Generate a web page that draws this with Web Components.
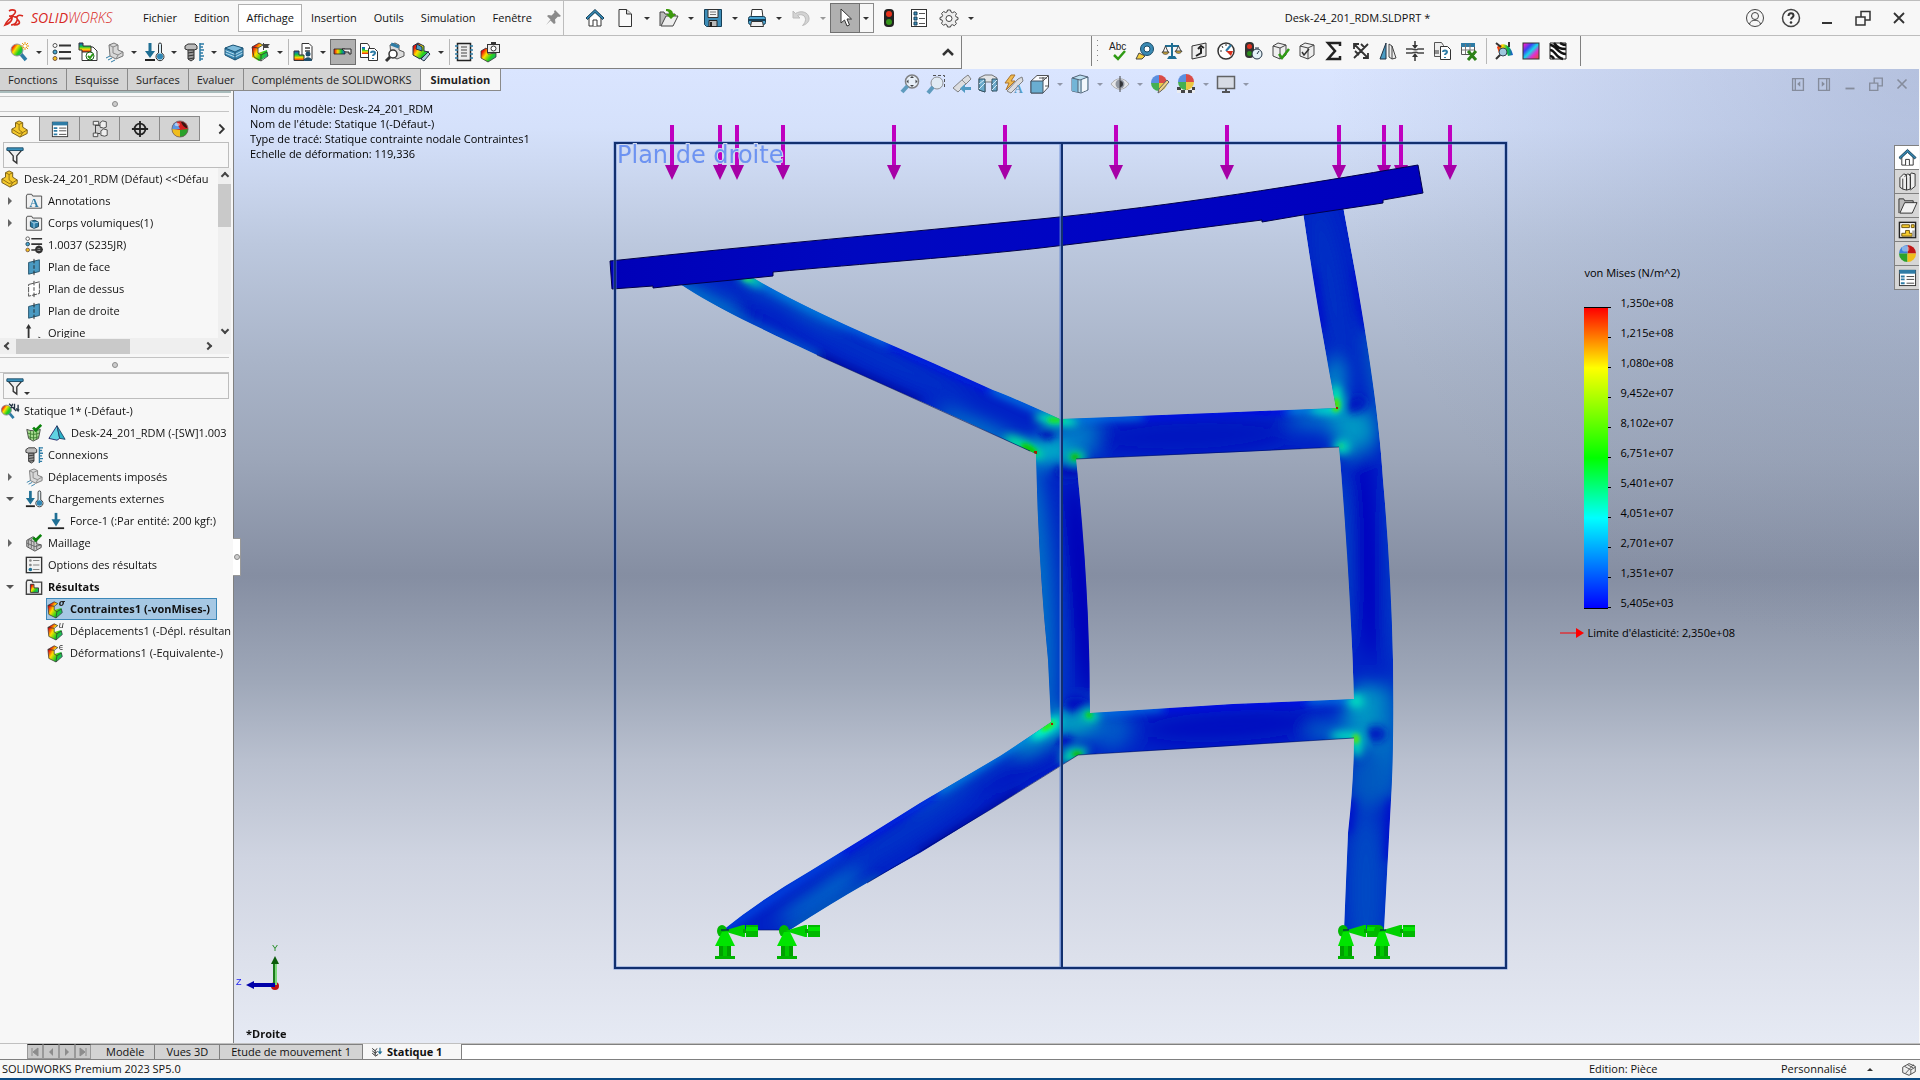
<!DOCTYPE html>
<html lang="fr">
<head>
<meta charset="utf-8">
<title>SOLIDWORKS - Desk-24_201_RDM.SLDPRT</title>
<style>
  html, body {
    margin: 0;
    height: 100%;
  }
  body {
    font: 11px/16px "Open Sans", "Noto Sans", sans-serif;
    color: #111;
    background: #f7f7f7;
    overflow: hidden;
  }
</style>
</head>
<body>
<cad-app></cad-app>

<script>
const ICONS = {
  // application bar
  pin: '<path d="M12 2l6 6-2 1-1-.5-3 3 .5 3.500-1.500 1-3.500-3.500L3 17l4.500-5.500L4 8l1.500-1 3 .5 3-3L11 3.500z" fill="#8b8b8b"/>',
  home: '<path d="M4 9v9h12V9L10 4z" fill="#fff" stroke="#333"/><path d="M8 18v-6h4v6" fill="#fff" stroke="#333"/><path d="M1 10l9-8.500L19 10l-1.500 1.500L10 4.500l-7.500 7z" fill="#3589b5" stroke="#173f56"/>',
  doc: '<path d="M4 1.500h7.500L16.500 6v12.500H4z" fill="#fafafa" stroke="#333"/><path d="M11.500 1.500V6h5" fill="#d8d8d8" stroke="#333"/>',
  open: '<path d="M1 18V4h4l1 2h10v3" fill="#bbb" stroke="#444"/><path d="M2 18l5-10h12l-5 10z" fill="#eee" stroke="#444"/><path d="M7 1c5 0 7 2 7 5h3l-5 5-5-5h3c0-2-1-3-3-3z" fill="#3c9a0c"/>',
  save: '<path d="M1.500 1.500h17v17h-15l-2-2z" fill="#3d8db8" stroke="#173f56"/><path d="M5 1.500h10v8H5z" fill="#f4f4f4" stroke="#333"/><path d="M7 4h6M7 6.500h6" stroke="#777"/><path d="M6 12.500h8v6H6z" fill="#bbb" stroke="#222"/><path d="M8 14v4" stroke="#222" stroke-width="2"/>',
  print: '<path d="M5 1.500h10l1 8H4z" fill="#fff" stroke="#333"/><rect x="1.500" y="8.500" width="17" height="8" rx="2" fill="#4ba5d2" stroke="#173f56"/><path d="M2 12h16" stroke="#173f56" stroke-width="2"/><path d="M4.500 13.500h11l1 5h-13z" fill="#eee" stroke="#333"/>',
  undo: '<path d="M2 3v7h7L6.500 7.500c4-2 8 0 8 4 0 2-1 4-3 6 4-1 7-4 6.500-7.500C17.500 4 10 2 4.500 5.500z" fill="#d3d3d3" stroke="#bbb"/>',
  cursor: '<path d="M6 1v14l3.500-3 2.500 6 2.500-1-2.500-6h4.500z" fill="#fff" stroke="#333"/>',
  traffic: '<rect x="5" y="1" width="10" height="18" rx="4" fill="#222"/><circle cx="10" cy="6" r="3" fill="#e8321c"/><circle cx="10" cy="14" r="3" fill="#35931b"/>',
  sheet: '<rect x="2.500" y="1.500" width="15" height="17" fill="#fff" stroke="#333"/><path d="M5 4h3v3H5zM5 9h3v3H5zM5 14h3v3H5z" fill="#3c8fbb" stroke="#173f56"/><path d="M10 5.500h6M10 10.500h6M10 15.500h6" stroke="#555"/>',
  gear: '<path d="M8.500 2h3l.5 2 1.500.7 2-1 2 2-1 1.800.7 1.500 1.800.5v2l-2 .7-.6 1.500 1 2-2 2-2-1-1.400.6-.5 1.700h-3L8 17l-1.600-.7-1.900 1-2-2 1-2L3 12l-2-.5v-2l2-.7.600-1.400-1-1.900 2-2 2 1L8 4z" fill="#eee" stroke="#444"/><circle cx="10" cy="10.500" r="3" fill="#fff" stroke="#444"/>',
  user: '<circle cx="10" cy="10" r="8.500" fill="none" stroke="#444"/><circle cx="10" cy="8" r="3.500" fill="none" stroke="#444"/><path d="M4.500 16c1-5 10-5 11 0" fill="none" stroke="#444"/>',
  help: '<circle cx="10" cy="10" r="8.500" fill="none" stroke="#444" stroke-width="1.500"/><path d="M7.500 8c0-4 5-3.500 5-.5 0 2-2.500 2-2.500 4" fill="none" stroke="#333" stroke-width="2"/><circle cx="10" cy="14.500" r="1.300" fill="#333"/>',
  minimize: '<path d="M5 15h10" stroke="currentColor" stroke-width="2"/>',
  restore: '<path d="M3 9h9v8H3zM8 9V3.500h9V12h-5" fill="none" stroke="currentColor" stroke-width="1.500"/>',
  close: '<path d="M5 5l10 10M15 5L5 15" stroke="currentColor" stroke-width="1.800"/>',
  panelLeft: '<path d="M4 4h12v13H4zM7 4v13" fill="none" stroke="currentColor" stroke-width="1.500"/><path d="M12.500 7v6L9 10z" fill="currentColor"/>',
  panelRight: '<path d="M4 4h12v13H4zM13 4v13" fill="none" stroke="currentColor" stroke-width="1.500"/><path d="M7.500 7v6l3.500-3z" fill="currentColor"/>',

  // simulation commands
  study: '<path d="M11 11l6 7" stroke="#2e7ca6" stroke-width="3.500"/><circle cx="8" cy="8" r="6" fill="url(#rb)" stroke="#999"/><path d="M16 0v8M12 4h8M13 1l6 6M19 1l-6 6" stroke="#e89a10"/><circle cx="16" cy="4" r="1.500" fill="#fff"/>',
  material: '<circle cx="3" cy="3.500" r="2" fill="#fff" stroke="#555"/><circle cx="3" cy="10" r="2" fill="#46a4d0" stroke="#245"/><circle cx="3" cy="16.500" r="2" fill="#f6c21a" stroke="#754"/><path d="M7 3.500h12M7 10h12M7 16.500h12" stroke="#333" stroke-width="2"/>',
  advisor: '<path d="M8 5h7l4 4v9.500H4V10z" fill="#fff" stroke="#333"/><path d="M1 1h4v3h8v6H4V8H1z" fill="url(#rbh)" stroke="#333"/><circle cx="12" cy="14" r="4" fill="#fff" stroke="#1a661a"/><path d="M10 14l2 2 3-4" fill="none" stroke="#2a9a12" stroke-width="2"/>',
  fixture: '<path d="M5 3l5-2 4 2v5l5 2v4l-7 3-6-3z" fill="#d8d8d8" stroke="#777"/><path d="M5 3l4 2v6l5 2 5-3M14 13l-2 4M9 5l5-2" fill="none" stroke="#888"/><path d="M2 16l4-2M4 18l4-2M7 20l4-2" stroke="#2e7ca6"/>',
  load: '<path d="M6 1v11" stroke="#1f6f94" stroke-width="3"/><path d="M1 9h10l-5 7z" fill="#1f6f94"/><path d="M1 18h10" stroke="#222" stroke-width="2"/><path d="M14.500 2.500a1.500 1.500 0 013 0V11a4 4 0 11-3 0z" fill="#d9eef8" stroke="#333"/><circle cx="16" cy="14.500" r="3" fill="#2f86b4"/>',
  connector: '<path d="M1 4l3-2h7l2 2v3l-3 1H4L1 7z" fill="#bbb" stroke="#333"/><path d="M4 8h6v9l-3 2-3-2z" fill="#999" stroke="#333"/><path d="M4 11l6-1M4 14l6-1M4 17l6-1" stroke="#333"/><path d="M16 1v18M16 2h4M16 5h3M16 8h4M16 11h3M16 14h4M16 17h3" stroke="#2e7ca6" stroke-width="1.500"/>',
  shells: '<path d="M1 6l8-3 10 3v8l-8 4-10-5z" fill="#3a88b2"/><path d="M1 6l8-3 10 3-8 4z" fill="#7dbbdb" stroke="#1c5374"/><path d="M1 8.500l10 4 8-4M1 11l10 4 8-4" fill="none" stroke="#b7ddf0"/><path d="M1 6v7l10 5 8-4V6M11 10v8" fill="none" stroke="#1c5374"/>',
  run: '<path d="M2 5l7-4 4 2-5 3v5l9-3 1 6-9 5-7-4z" fill="url(#rb)"/><path d="M2 5l7-4 4 2-5 3v5l3 2 6-3 1 4-7 5-7-4zM2 5l6 1M11 13v6" fill="none" stroke="#333" stroke-width=".8"/><path d="M13 1h1v7h-1zM14 2h6l-2 2 1 2h-5z" fill="#444"/>',
  results: '<path d="M9 1.500h7l3 3v13H9z" fill="#fff" stroke="#333"/><path d="M12 6h5M12 9h5" stroke="#444" stroke-width="1.500"/><path d="M1 9h5v4h5v5.500H1z" fill="url(#rbh)" stroke="#333"/><circle cx="15" cy="12" r="2.500" fill="#204f6c"/><path d="M11 19c0-5 8-5 8 0z" fill="#204f6c"/>',
  deformed: '<path d="M1 7h11v5H1z" fill="url(#rbx)" stroke="#222" stroke-width=".8"/><path d="M9 7h9v5h-2v-2h-2c-2 0-3-1-5-3z" fill="#eee" stroke="#222"/>',
  compare: '<path d="M1.500 1.500h7l2 3v11h-9z" fill="#fff" stroke="#333"/><path d="M3 5h3v3h3v4H3z" fill="url(#rbh)"/><path d="M9.500 6.500h6l3 3v9h-9z" fill="#fff" stroke="#333"/><path d="M12 11c0-2 4-2 4 0 0 1.500-2 1.500-2 3M14 16v1" fill="none" stroke="#2e7ca6" stroke-width="2"/>',
  probe: '<path d="M5 3l5-2 4 2v5l5 2v4l-7 3-6-3z" fill="#ddd" stroke="#555"/><path d="M6 2l8 3" stroke="#2e7ca6" stroke-width="3"/><circle cx="8" cy="12" r="4" fill="#fff" stroke="#333" stroke-width="1.500"/><path d="M5 15l-4 4" stroke="#333" stroke-width="3"/>',
  plotTools: '<path d="M2 4l5-3 6 3v5l5 1-9 7-7-4z" fill="url(#rb)" stroke="#234"/><path d="M6 2l5 3v4L5 7z" fill="#4a9cc4" stroke="#234"/><path d="M10 17l7-7 2 2-6 7z" fill="#a8cbe0" stroke="#234"/>',
  report: '<rect x="3.500" y="1.500" width="13" height="17" fill="#eee" stroke="#222" stroke-width="1.500"/><path d="M7 5h6M7 8h6M7 11h6M7 14h6" stroke="#444"/><path d="M1 4h3M1 8h3M1 12h3M1 16h3M16 4h3M16 8h3M16 12h3M16 16h3" stroke="#2e7ca6" stroke-width="1.500"/>',
  snapshot: '<path d="M1 9l5-3 2 2v4l8-1v4l-8 5-7-4z" fill="url(#rb)" stroke="#333" stroke-width=".8"/><rect x="7.500" y="2.500" width="12" height="8" fill="#eee" stroke="#333"/><circle cx="13.500" cy="6.500" r="2.500" fill="#fff" stroke="#333"/><path d="M11 1h5" stroke="#333" stroke-width="2"/>',
  up: '<path d="M5 13l5-5 5 5" fill="none" stroke="#333" stroke-width="2.500"/>',

  // tools toolbar
  spell: '<text x="1" y="9" font-size="10" font-family="Liberation Sans" fill="#222">Abc</text><path d="M6 14l4 4 7-8" fill="none" stroke="#2f9a14" stroke-width="2.500"/>',
  measure: '<path d="M1 18l3-6 6 3-3 3z" fill="#f4cf3e" stroke="#444"/><circle cx="12" cy="8" r="6.500" fill="#3a8ab4" stroke="#1c4c66"/><circle cx="12" cy="8" r="3" fill="#fff" stroke="#1c4c66"/>',
  mass: '<path d="M10 2v13M3 5h14" stroke="#1f6f94" stroke-width="2"/><path d="M5 18h10l-2-3H7z" fill="#1f6f94"/><path d="M0 11h7c-1 3-6 3-7 0zM13 10h7c-1 3-6 3-7 0z" fill="#e8b92c" stroke="#444"/><path d="M3.500 5L1 11M3.500 5L6 11M16.500 5L14 10M16.500 5L19 10" stroke="#444"/>',
  section: '<path d="M3 5l14-3v13L3 18z" fill="#eee" stroke="#333"/><path d="M7 15l5-3V7M9 8l3-3 3 2" fill="none" stroke="#222" stroke-width="2"/>',
  sensor: '<circle cx="10" cy="10" r="8" fill="#fff" stroke="#333" stroke-width="1.500"/><path d="M10 10l5-6" stroke="#2e7ca6" stroke-width="2"/><path d="M10 10h7l-2 5z" fill="#d8301c"/><path d="M4 10h2M6 5l1 2M10 3v2" stroke="#333"/>',
  performance: '<rect x="2" y="1" width="9" height="16" rx="4" fill="#333"/><circle cx="6.500" cy="5.500" r="2.500" fill="#e03020"/><circle cx="6.500" cy="12.500" r="2.500" fill="#2a8a1c"/><circle cx="14" cy="13" r="5" fill="#e6f2f8" stroke="#234"/><path d="M14 13l2-3M12 7h4" stroke="#234"/>',
  checkPart: '<path d="M3 5l5-3 8 2v10l-6 4-7-3z" fill="#eee" stroke="#444"/><path d="M3 5l7 2 6-3M10 7v11" fill="none" stroke="#444"/><path d="M9 13l3 4 7-9" fill="none" stroke="#2f9a14" stroke-width="2.500"/>',
  geometry: '<path d="M3 5l5-3 9 2v10l-6 4-8-3z" fill="#eee" stroke="#444"/><path d="M3 5l8 2 6-3M11 7v11" fill="none" stroke="#444"/><path d="M5 11l2 3 5-6" fill="none" stroke="#333" stroke-width="1.500"/>',
  sigma: '<path d="M16 5V2H4l7 8-7 8h12v-3" fill="none" stroke="#222" stroke-width="2.500"/>',
  deviation: '<path d="M3 3l14 14M17 3L3 17M3 8V3h5M12 17h5v-5M10 3l4 4M4 10l4 4" fill="none" stroke="#333" stroke-width="1.800"/>',
  draft: '<path d="M2 18L8 2v16z" fill="#4a9cc4" stroke="#234"/><path d="M11 3l3 2v13l-3-2zM14 5l4 12-4 1" fill="#eee" stroke="#444"/>',
  thickness: '<path d="M1 8h6c2 0 4 2 6 0h6M1 12h6c2 0 4-2 6 0h6" fill="none" stroke="#444" stroke-width="1.500"/><path d="M10 0v5M10 20v-5" stroke="#333" stroke-width="1.500"/><path d="M7 4h6l-3 4zM7 16h6l-3-4z" fill="#333"/>',
  compareDocs: '<path d="M2.500 1.500h7l2 3v11h-9z" fill="#eee" stroke="#555"/><path d="M8.500 5.500h7l3 3v10h-10z" fill="#fff" stroke="#333"/><path d="M11 11c0-2 4-2 4 0 0 1.500-2 1.500-2 3M13 16v1" fill="none" stroke="#2e7ca6" stroke-width="2"/><path d="M2 10h5M2 12h5" stroke="#333"/>',
  excel: '<path d="M2.500 2.500h13v11h-13z" fill="#fff" stroke="#555"/><path d="M2 4h14" stroke="#2e7ca6" stroke-width="4"/><path d="M3 9h12M6.500 3v10M11 3v10" stroke="#777"/><path d="M9 10l8 9M17 10l-8 9" stroke="#2d8218" stroke-width="3"/>',
  curvature: '<path d="M3 6c6-6 14-2 16 8l-5 1c-1-5-5-6-9-3z" fill="url(#rbx)"/><circle cx="9" cy="11" r="4" fill="#9ec7dd" stroke="#345"/><path d="M6 14l-4 4M2 2l5 4M15 1v5" stroke="#333" stroke-width="2"/>',
  spectrum: '<rect x="2" y="2" width="16" height="16" fill="url(#sp)" stroke="#333"/>',
  zebra: '<path d="M2 2h16v16H2z" fill="#fff"/><path d="M2 4c6 0 8 9 16 9M2 9c5 0 6 8 13 9M6 2c4 5 6 6 12 6M2 15c2 0 3 1 4 3M12 2c2 1 3 2 6 2" fill="none" stroke="#111" stroke-width="2.500"/><path d="M2 2h16v16H2z" fill="none" stroke="#222"/>',

  // view toolbar
  zoomFit: '<circle cx="12" cy="7.500" r="6.500" fill="#e9f1f8" stroke="#777" stroke-width="1.500"/><path d="M7.500 12L2 18" stroke="#5294b8" stroke-width="4"/><path d="M12 2l2 2h-4zM12 13l2-2h-4zM6.500 7.500l2-2v4zM17.500 7.500l-2-2v4z" fill="#333"/>',
  zoomArea: '<path d="M7 1.500h11.500V14" fill="none" stroke="#444" stroke-dasharray="3 2"/><circle cx="11" cy="9" r="6" fill="#e2ecf4" stroke="#888"/><path d="M7 13l-5 6" stroke="#5294b8" stroke-width="4"/>',
  previous: '<path d="M1 14L12 4l4-3 3 4-3 3L6 18z" fill="#ddd" stroke="#777"/><path d="M10 6l4 4" stroke="#888"/><path d="M19 13h-6v-3l-5 4.500 5 4.500v-3h6z" fill="#4393bd"/>',
  sectionView: '<path d="M1 4l6-3h7l5 3v12l-5 1V8H7v10l-6-2z" fill="#e4e4e4" stroke="#666"/><path d="M1 5h6v13l-6-2zM14 5h5v12h-5z" fill="#5da3c6" stroke="#245"/><path d="M1 10l5-4M1 15l6-6M14 11l5-5M14 16l5-5" stroke="#d5ebf6"/>',
  dynamicView: '<path d="M7 1L1 9h4l-3 7 9-9H7l4-6z" fill="#f3b63a" stroke="#a5681a"/><path d="M3 17L14 5l4-2 1 4L7 19z" fill="#ddd" stroke="#777"/><text x="10" y="19" font-size="12" font-weight="700" font-family="Liberation Serif" fill="#4a92ba">A</text>',
  orientation: '<path d="M1 7l6-5.500h11.500V13L13 19H1z" fill="#fff" stroke="#444"/><path d="M1 7h12v12H1z" fill="#5fa9cd" stroke="#345"/><path d="M13 7l5-5M13 3v4M9 4h8M15 12h4" stroke="#444"/>',
  display: '<path d="M2 4l8-3 8 2v13l-7 3-9-2z" fill="#b9dff0" stroke="#456"/><path d="M2 4l6 1v13l-6-1z" fill="#69b1d3"/><path d="M2 4l8 2 8-3M8 5v13M11 6v12" fill="none" stroke="#456"/><path d="M12 6l5-2v12l-5 2z" fill="#f5fafc"/>',
  visibility: '<path d="M1 10c5-7 13-7 18 0-5 7-13 7-18 0z" fill="#e7e7e7" stroke="#aaa"/><circle cx="10" cy="10" r="4.500" fill="#8a8f98"/><path d="M10 2v16" stroke="#333"/><path d="M10 7a3 3 0 010 6z" fill="#222"/>',
  appearance: '<path d="M9 9V1a8 8 0 018 8z" fill="#da3c34"/><path d="M9 9V1a8 8 0 00-8 8z" fill="#4d86dd"/><path d="M9 9H1a8 8 0 008 8z" fill="#36ab3e"/><path d="M9 9h8a8 8 0 01-8 8z" fill="#efc52e"/><path d="M8 19l1-4 8-9 2 2-8 9z" fill="#f4d27a" stroke="#555"/>',
  scene: '<path d="M1 14h18v5H1z" fill="#eee"/><path d="M1 13h4v3H1zM9 13h3v3H9zM16 13h3v3h-3zM5 16h4v3H5zM12 16h4v3h-4z" fill="#333"/><path d="M10 8V0a8 8 0 018 8z" fill="#da3c34"/><path d="M10 8V0a8 8 0 00-8 8z" fill="#4d86dd"/><path d="M10 8H2a8 8 0 008 8z" fill="#36ab3e"/><path d="M10 8h8a8 8 0 01-8 8z" fill="#efc52e"/>',
  monitor: '<rect x="1.500" y="2.500" width="17" height="12" fill="#d7dbe2" stroke="#555" stroke-width="1.500"/><path d="M10 15v3M6 18h8" stroke="#444" stroke-width="2"/>',

  // panels and trees
  part: '<path d="M1 10l4-2V3l4-2 4 2v5l5 3v4l-8 4-9-5z" fill="#f5c92c" stroke="#6d5410"/><path d="M5 3l4 2v6l4 3 5-3M9 5l4-2M10 19l3-5M1 10l8 5 4-1" fill="none" stroke="#8b6b12"/>',
  property: '<rect x="1.500" y="2.500" width="17" height="16" fill="#fff" stroke="#333"/><path d="M1.500 4h17" stroke="#2e7ca6" stroke-width="4"/><path d="M3 8h4v2H3zM3 11h4v2H3zM3 15h4v2H3z" fill="#2e7ca6"/><path d="M9 9h8M9 12h8M9 16h8" stroke="#444"/>',
  config: '<path d="M5 2v15M5 6h5M5 15h5" stroke="#333" fill="none"/><path d="M2.500 1.500h6v4h-6zM2.500 14.500h5v4h-5zM10 3l3-2 4 1v6l-3 1-4-1zM11 12l3-2 4 1v6l-3 1-4-1z" fill="#eee" stroke="#444"/>',
  target: '<circle cx="10" cy="10" r="6" fill="none" stroke="#222" stroke-width="2"/><path d="M10 1v18M1 10h18" stroke="#222" stroke-width="2"/>',
  ball: '<path d="M10 10V1a9 9 0 019 9z" fill="#c01818"/><path d="M10 10V1a9 9 0 00-9 9z" fill="#3a80da"/><path d="M10 10H1a9 9 0 009 9z" fill="#2ba22b"/><path d="M10 10h9a9 9 0 01-9 9z" fill="#f0bd1c"/><ellipse cx="8" cy="5" rx="4" ry="3" fill="#fff" opacity=".4"/>',
  ballHalf: '<circle cx="10" cy="10" r="9" fill="#d42020"/><path d="M10 10L6 2a9 9 0 00-5 9z" fill="#5b97e4"/><path d="M1 10l9 1v8a9 9 0 01-9-9z" fill="#f0bd1c"/><path d="M10 11l9-1a9 9 0 01-9 9z" fill="#2ba22b"/><path d="M11 2c4 0 7 4 7 7-3 0-6-4-7-7z" fill="#3a1410"/><ellipse cx="7" cy="5" rx="3" ry="2" fill="#fff" opacity=".5"/><circle cx="10" cy="10" r="9" fill="none" stroke="#666" stroke-width=".8"/>',
  next: '<path d="M7 5l5 5-5 5" fill="none" stroke="#333" stroke-width="2"/>',
  filter: '<path d="M2 4h16l-6 7v8l-4-3v-5z" fill="#eee" stroke="#333" stroke-width="1.500"/><path d="M1 2h18v3H1z" fill="#3a92bd" stroke="#1c4c66"/>',
  annotations: '<path d="M1.500 18V4.500l1-2h5l1 2h10V18z" fill="#f0f0f0" stroke="#444"/><text x="5" y="17" font-size="14" font-weight="700" font-family="Liberation Serif" fill="#2e7ca6">A</text>',
  bodies: '<path d="M1.500 18V4.500l1-2h5l1 2h10V18z" fill="#f0f0f0" stroke="#444"/><path d="M6 8l5-1 4 2v5l-5 2-4-2z" fill="#2e7ca6" stroke="#173f56"/><path d="M6 8l4 2 5-1M10 10v6" fill="none" stroke="#b7ddf0"/>',
  steel: '<circle cx="3" cy="3" r="2" fill="#fff" stroke="#555"/><circle cx="3" cy="9" r="2" fill="#46a4d0" stroke="#245"/><circle cx="3" cy="15.500" r="2" fill="#f6c21a" stroke="#754"/><path d="M7 3h12M7 9h12M7 15.500h5" stroke="#333" stroke-width="1.800"/><circle cx="15.500" cy="15" r="3" fill="none" stroke="#333" stroke-width="2.500"/><path d="M15.500 10.500v9M11 15h9" stroke="#333"/>',
  plane: '<path d="M4 5l12-3v13L4 18z" fill="#4a9ac2" stroke="#1f4f69"/><path d="M10 1v5M10 8v4M10 14v5" stroke="#222"/>',
  planeHidden: '<path d="M4 5l12-3v13L4 18z" fill="#fff" stroke="#444" stroke-dasharray="6 1"/><path d="M10 1v5M10 8v4M10 14v5" stroke="#333"/>',
  origin: '<path d="M4 3v14h13" fill="none" stroke="#333" stroke-width="2"/><path d="M1 5l3-5 3 5zM15 14l5 3-5 3z" fill="#333"/>',
  studyTree: '<path d="M9 12l5 6" stroke="#2e7ca6" stroke-width="3"/><circle cx="6" cy="9" r="5.500" fill="url(#rb)" stroke="#888"/><path d="M9 2l8 8M11 7l2-5M15 9V2M19 3v7M17 7l2 3 1-2" fill="none" stroke="#234" stroke-width="1.500"/>',
  meshOk: '<path d="M2 6c4 2 11 2 15 0l-2 10-6 3-5-3z" fill="#a8dc90" stroke="#444"/><path d="M6 8v9M9.500 8v10M13 8v9M3 10c4 2 9 2 13 0M4 14c3 2 8 2 11 0" fill="none" stroke="#3c7d31"/><path d="M9 4l3 3 6-6" fill="none" stroke="#0b830b" stroke-width="3"/>',
  shell: '<path d="M1 16L10 2l3 14-3 2z" fill="#5fd3e2" stroke="#226"/><path d="M10 2l9 15-6-1z" fill="#2ab2c8" stroke="#246"/>',
  force: '<path d="M10 1v10" stroke="#1f6f94" stroke-width="3"/><path d="M5 8h10l-5 8z" fill="#1f6f94"/><path d="M1 18h18" stroke="#222" stroke-width="2"/>',
  mesh: '<path d="M2 7l7-4 4 3v5l5 1v3l-7 4-9-5z" fill="#ccc" stroke="#444"/><path d="M4 6v8M7 5v11M10 9v9M2 10l9 4 7-2M13 12v5M4 6l6 3 3-3" fill="none" stroke="#666"/><path d="M9 4l3 3 6-6" fill="none" stroke="#0b830b" stroke-width="3"/>',
  options: '<rect x="1.500" y="1.500" width="17" height="17" fill="#f2f2f2" stroke="#333" stroke-width="1.500"/><circle cx="6" cy="5" r="1.500" fill="#888"/><circle cx="6" cy="10" r="1.500" fill="#888"/><circle cx="6" cy="15" r="2" fill="#1f6f94"/><path d="M9 5h7M9 10h7M9 15h7" stroke="#777"/>',
  folder: '<path d="M1.500 18V4.500l1-2h5l1 2h10V18z" fill="#f0f0f0" stroke="#444" stroke-width="1.500"/><path d="M6 7h4v4h5v5H6z" fill="url(#rb)" stroke="#333"/>',
  stress: '<path d="M1 6l7-4 4 2-4 2v5l8-2 1 5-7 6-8-4z" fill="url(#rb)"/><path d="M1 6l7-4 4 2-4 3v4l3 2 5-3 1 4-7 6-8-4zM1 6l7 1M11 13l-1 7" fill="none" stroke="#333" stroke-width=".8"/><text x="13" y="7" font-size="9" font-style="italic" font-family="DejaVu Sans" fill="#222">σ</text>',
  displacement: '<path d="M1 6l7-4 4 2-4 2v5l8-2 1 5-7 6-8-4z" fill="url(#rb)"/><path d="M1 6l7-4 4 2-4 3v4l3 2 5-3 1 4-7 6-8-4zM1 6l7 1M11 13l-1 7" fill="none" stroke="#333" stroke-width=".8"/><text x="13" y="7" font-size="9" font-style="italic" font-family="DejaVu Sans" fill="#222">u</text>',
  strain: '<path d="M1 6l7-4 4 2-4 2v5l8-2 1 5-7 6-8-4z" fill="url(#rb)"/><path d="M1 6l7-4 4 2-4 3v4l3 2 5-3 1 4-7 6-8-4zM1 6l7 1M11 13l-1 7" fill="none" stroke="#333" stroke-width=".8"/><text x="13" y="7" font-size="9" font-family="DejaVu Sans" fill="#222">ϵ</text>',

  // task pane
  library: '<path d="M2 6l4-4 3 1v16l-4-1-3-2zM7 5l3-3 3 1v15l-4 1M12 4l2-3 4 1v13l-5 4" fill="#eee" stroke="#333"/><path d="M5 7v11M9 6v12M13 5v13" stroke="#333"/>',
  explorer: '<path d="M1 18V3h5l1 2h9v4" fill="#bbb" stroke="#333"/><path d="M2 18L7 7h13l-5 11z" fill="#f2f2f2" stroke="#333"/>',
  palette: '<rect x="1.500" y="2.500" width="17" height="16" fill="#fff" stroke="#222" stroke-width="1.500"/><path d="M4 5h8v3H4zM14 5h3v3h-3zM8 11h4v3h3v3H4v-3h4z" fill="#f6cb2c" stroke="#6d5410"/><path d="M15 11h3v7h-3z" fill="#aaa"/>',
  tag: '<path d="M3 8l7-4 7 3v6l-7 4-7-3z" fill="#eee" stroke="#444"/><path d="M5 7l7 4 5-3M8 5l7 4M12 11v5M6 15l9-10" fill="none" stroke="#555"/>',
  motion: '<path d="M2 4l5 4v8M2 8l5 4M2 12l5 4M10 4l-3 4M11 9l-4 3M12 14l-5 3" fill="none" stroke="#222" stroke-width="1.500"/><path d="M15 3v9" stroke="#1f6f94" stroke-width="2"/><path d="M11 9h8l-4 5z" fill="#1f6f94"/>',
  logo: '<path d="M5 3c3-2 8-1 6 2-1 2-4 3-6 3 5 0 4 6-4 9 2-4 5-7 9-9M7 17c6 0 9-9 3-8M19 8c-5-2-8 1-5 4s1 5-4 5" fill="none" stroke="#d8281e" stroke-width="1.600"/>',
};

class CadIcon extends HTMLElement {
  constructor() {
    super();
    this.attachShadow({ mode: 'open' });
  }
  connectedCallback() {
    this.shadowRoot.innerHTML = `
      <style>
        :host { display: inline-block; flex: none; inline-size: var(--icon-size, 20px); block-size: var(--icon-size, 20px); }
        svg { display: block; inline-size: 100%; block-size: 100%; overflow: visible; }
      </style>
      <svg viewBox="0 0 20 20" aria-hidden="true">
        <defs>
          <linearGradient id="rb" x1="0" y1=".2" x2="1" y2=".9">
            <stop offset=".1" stop-color="#f01008"/><stop offset=".35" stop-color="#ffe000"/>
            <stop offset=".65" stop-color="#20d020"/><stop offset="1" stop-color="#18a0a0"/>
          </linearGradient>
          <linearGradient id="rbh" x1="0" y1="0" x2="0" y2="1">
            <stop offset="0" stop-color="#1850e0"/><stop offset=".4" stop-color="#10c840"/>
            <stop offset=".7" stop-color="#ffd800"/><stop offset="1" stop-color="#e81010"/>
          </linearGradient>
          <linearGradient id="rbx">
            <stop offset="0" stop-color="#e81010"/><stop offset=".35" stop-color="#ffd800"/>
            <stop offset=".65" stop-color="#10c040"/><stop offset="1" stop-color="#1850e0"/>
          </linearGradient>
          <linearGradient id="sp" x1="0" y1="0" x2="1" y2="1">
            <stop offset=".1" stop-color="#e020d0"/><stop offset=".3" stop-color="#4040f0"/>
            <stop offset=".5" stop-color="#18d8e8"/><stop offset=".7" stop-color="#e030d0"/>
            <stop offset="1" stop-color="#f05020"/>
          </linearGradient>
        </defs>
        ${ICONS[this.getAttribute('name')] || ''}
      </svg>`;
  }
}
customElements.define('cad-icon', CadIcon);

class CadTool extends HTMLElement {
  constructor() {
    super();
    this.attachShadow({ mode: 'open' });
  }
  connectedCallback() {
    const icon = this.getAttribute('icon');
    const label = this.getAttribute('label') || icon;
    const menu = this.hasAttribute('menu')
      ? `<button class="menu" aria-label="Options ${label}"></button>` : '';
    this.shadowRoot.innerHTML = `
      <style>
        :host { display: flex; flex: none; align-items: stretch; box-sizing: border-box; block-size: var(--tool-height, 26px); }
        button { box-sizing: border-box; display: grid; place-items: center; margin: 0; padding: 0; border: 0; background: none; color: inherit; }
        .main { inline-size: var(--tool-size, 26px); }
        .menu { inline-size: 14px; }
        .menu::after { content: ""; border: solid transparent; border-width: 3px 3px 0; border-top-color: var(--caret, #333); }
        :host([pressed]) .main { background: #b0b0b0; border: 1px solid #707070; }
        :host([pressed]) .menu { border: 1px solid #8a8a8a; border-left: 0; }
        :host([disabled]) .menu::after { border-top-color: #999; }
      </style>
      <button class="main" aria-label="${label}"><cad-icon name="${icon}"></cad-icon></button>${menu}`;
  }
}
customElements.define('cad-tool', CadTool);

class CadTitleBar extends HTMLElement {
  constructor() {
    super();
    this.attachShadow({ mode: 'open' });
    this.shadowRoot.innerHTML = `
      <style>
        :host { display: flex; align-items: center; box-sizing: border-box; block-size: 36px; border: solid #bdbdbd; border-width: 1px 0; --tool-size: 30px; --tool-height: 30px; }
        .brand { display: flex; align-items: center; gap: 7px; inline-size: 134px; padding-inline-start: 4px; box-sizing: border-box; color: #d8281e; font: italic 300 14px/20px "Open Sans", sans-serif; }
        .brand cad-icon { --icon-size: 20px; }
        nav { display: flex; }
        nav button { box-sizing: border-box; block-size: 28px; margin: 0; padding: 0 8px 0 9px; border: 1px solid transparent; border-width: 1px 0; background: none; color: #111; font: inherit; }
        nav .open { background: #fff; border: 1px solid #b0b0b0; padding: 0 7px 0 8px; }
        .pin { padding-inline: 3px 0; }
        .tools { display: flex; align-items: center; padding-inline-start: 16px; border-inline-start: 1px solid #bdbdbd; block-size: 34px; }
        h1 { flex: 1; margin: 0; text-align: center; font: inherit; }
        .window { display: flex; padding-inline-end: 3px; color: #333; --tool-size: 36px; }
      </style>
      <div class="brand"><cad-icon name="logo"></cad-icon><span><b>SOLID</b>WORKS</span></div>
      <nav>
        <button>Fichier</button><button>Edition</button><button class="open">Affichage</button>
        <button>Insertion</button><button>Outils</button><button>Simulation</button><button>Fenêtre</button>
      </nav>
      <cad-icon class="pin" name="pin"></cad-icon>
      <div class="tools">
        <cad-tool icon="home" label="Accueil"></cad-tool>
        <cad-tool icon="doc" label="Nouveau" menu></cad-tool>
        <cad-tool icon="open" label="Ouvrir" menu></cad-tool>
        <cad-tool icon="save" label="Enregistrer" menu></cad-tool>
        <cad-tool icon="print" label="Imprimer" menu></cad-tool>
        <cad-tool icon="undo" label="Annuler" menu disabled></cad-tool>
        <cad-tool icon="cursor" label="Sélectionner" menu pressed></cad-tool>
        <cad-tool icon="traffic" label="Reconstruire"></cad-tool>
        <cad-tool icon="sheet" label="Propriétés"></cad-tool>
        <cad-tool icon="gear" label="Réglages" menu></cad-tool>
      </div>
      <h1>Desk-24_201_RDM.SLDPRT *</h1>
      <div class="window">
        <cad-tool icon="user" label="Connexion"></cad-tool>
        <cad-tool icon="help" label="Aide"></cad-tool>
        <cad-tool icon="minimize" label="Réduire"></cad-tool>
        <cad-tool icon="restore" label="Restaurer"></cad-tool>
        <cad-tool icon="close" label="Fermer"></cad-tool>
      </div>`;
  }
}
customElements.define('cad-title-bar', CadTitleBar);

class CadCommandBar extends HTMLElement {
  constructor() {
    super();
    this.attachShadow({ mode: 'open' });
    const tool = name => `<cad-tool icon="${name}"></cad-tool>`;
    this.shadowRoot.innerHTML = `
      <style>
        :host { display: flex; block-size: 33px; box-sizing: border-box; }
        .bar { display: flex; align-items: center; }
        .commands { inline-size: 50.1%; box-sizing: border-box; border: solid #808080; border-width: 0 1px 1px 0; padding-inline-start: 6px; }
        .extra { block-size: 30px; margin-inline-start: 6.7%; padding-inline: 4px 8px; border: solid #808080; border-width: 0 1px; --tool-size: 27px; }
        .grip { inline-size: 3px; block-size: 26px; margin-inline-end: 6px; background: radial-gradient(circle, #888 1px, transparent 1px) 0 0 / 3px 5px; }
        hr { inline-size: 1px; block-size: 26px; margin: 0 1px; border: 0; background: #b8b8b8; }
        .extra hr { margin: 0 4px 0 3px; }
        .fold { margin-inline-start: auto; }
      </style>
      <div class="bar commands">
        <cad-tool icon="study" menu></cad-tool><hr>
        ${tool('material')}${tool('advisor')}
        <cad-tool icon="fixture" menu></cad-tool><cad-tool icon="load" menu></cad-tool><cad-tool icon="connector" menu></cad-tool>
        ${tool('shells')}<cad-tool icon="run" menu></cad-tool><hr>
        <cad-tool icon="results" menu></cad-tool><cad-tool icon="deformed" pressed></cad-tool>
        ${tool('compare')}${tool('probe')}<cad-tool icon="plotTools" menu></cad-tool><hr>
        ${tool('report')}${tool('snapshot')}
        <cad-tool class="fold" icon="up" label="Replier"></cad-tool>
      </div>
      <div class="bar extra">
        <span class="grip"></span>
        ${['spell', 'measure', 'mass', 'section', 'sensor', 'performance', 'checkPart', 'geometry', 'sigma',
           'deviation', 'draft', 'thickness', 'compareDocs', 'excel'].map(tool).join('')}<hr>
        ${['curvature', 'spectrum', 'zebra'].map(tool).join('')}
      </div>`;
  }
}
customElements.define('cad-command-bar', CadCommandBar);

class CadTabs extends HTMLElement {
  constructor() {
    super();
    this.attachShadow({ mode: 'open' });
    this.shadowRoot.innerHTML = `
      <style>
        :host { display: flex; block-size: 22px; }
        ::slotted(button) { box-sizing: border-box; margin: 0; padding: 0 8px; border: solid #8a8a8a; border-width: 0 1px 1px 0; background: #d3d3d3; color: #222; font: inherit; }
        ::slotted(button[aria-selected="true"]) { background: #f7f7f7; font-weight: 700; padding: 0 10px; }
      </style>
      <slot></slot>`;
  }
  connectedCallback() {
    this.setAttribute('role', 'tablist');
  }
}
customElements.define('cad-tabs', CadTabs);

class CadTreeItem extends HTMLElement {
  constructor() {
    super();
    this.attachShadow({ mode: 'open' });
  }
  connectedCallback() {
    const icons = (this.getAttribute('icon') || '').split(' ');
    const toggle = this.getAttribute('toggle');
    this.shadowRoot.innerHTML = `
      <style>
        :host { display: flex; align-items: center; block-size: 22px; white-space: nowrap; padding-inline-start: var(--indent, 4px); --icon-size: 18px; }
        :host([level="0"]) { --indent: 0; }
        :host([level="2"]) { --indent: 26px; }
        .toggle { flex: none; display: grid; place-items: center; inline-size: 12px; block-size: 12px; margin: 0 8px 0 0; padding: 0; border: 0; background: none; }
        .toggle.closed::after { content: ""; border: solid transparent; border-width: 4px 0 4px 4px; border-left-color: #666; }
        .toggle.open::after { content: ""; border: solid transparent; border-width: 4px 4px 0; border-top-color: #555; }
        .label { display: flex; align-items: center; gap: 5px; padding: 1px 6px 1px 0; border: 1px solid transparent; }
        :host([bold]) .label { font-weight: 700; }
        :host([selected]) .label { background: #a6c8e4; border-color: #3c87b8; block-size: 22px; box-sizing: border-box; }
      </style>
      ${this.getAttribute('level') === '0' ? '' : `<button class="toggle ${toggle || ''}" ${toggle ? '' : 'disabled'} aria-label="Développer"></button>`}
      <span class="label">${icons.map(n => `<cad-icon name="${n}"></cad-icon>`).join('')}<span><slot></slot></span></span>`;
    this.setAttribute('role', 'treeitem');
  }
}
customElements.define('cad-tree-item', CadTreeItem);

class CadFilter extends HTMLElement {
  constructor() {
    super();
    this.attachShadow({ mode: 'open' });
  }
  connectedCallback() {
    this.shadowRoot.innerHTML = `
      <style>
        :host { display: flex; align-items: center; box-sizing: border-box; block-size: 26px; margin: 0 4px 0 3px; padding-inline-start: 2px; border: 1px solid #bdbdbd; --icon-size: 18px; }
        :host([menu]) label::after { content: ""; align-self: end; border: solid transparent; border-width: 3px 3px 0; border-top-color: #333; }
        label { display: flex; }
        input { flex: 1; min-inline-size: 0; border: 0; background: none; font: inherit; outline: 0; }
      </style>
      <label for="q" aria-label="Filtrer l'arbre"><cad-icon name="filter"></cad-icon></label>
      <input id="q" type="text">`;
  }
}
customElements.define('cad-filter', CadFilter);

class CadSidePanel extends HTMLElement {
  constructor() {
    super();
    this.attachShadow({ mode: 'open' });
    this.shadowRoot.innerHTML = `
      <style>
        :host { position: relative; display: flex; flex-direction: column; box-sizing: border-box; min-block-size: 0; background: #f7f7f7; border-inline-end: 1px solid #808080; }
        .splitter { flex: none; display: grid; place-items: center; box-sizing: border-box; block-size: 16px; margin-inline-end: 4px; border: solid #c4c4c4; border-width: 1px 0; }
        .dot { inline-size: 4px; block-size: 4px; border: 1px solid #8a8a8a; border-radius: 50%; background: #ccc; }
        .top { flex: none; block-size: 5px; border-top: 2px solid #a9bcbc; box-sizing: border-box; margin-inline-end: 2px; }
        .tabs { display: flex; margin-top: 4px; block-size: 25px; padding-inline-end: 1px; }
        .tabs button { box-sizing: border-box; inline-size: 40px; padding: 0; margin: 0; display: grid; place-items: center; border: 1px solid #8a8a8a; border-inline-start: 0; background: #d3d3d3; --icon-size: 18px; }
        .tabs .active { background: #f7f7f7; border-bottom: 0; }
        .tabs .more { border: 0; background: none; margin-inline-start: auto; inline-size: 20px; }
        .first { margin-top: 1px; }
        .feature { display: grid; grid-template-columns: 1fr 13px; block-size: 170px; margin-inline-end: 2px; }
        .tree { overflow: hidden; min-inline-size: 0; }
        .scroll { display: flex; justify-content: space-between; align-items: center; background: #efefef; }
        .scroll.y { flex-direction: column; }
        .scroll.x { block-size: 16px; margin-inline-end: 2px; }
        .scroll i { border: solid #444; border-width: 2px 2px 0 0; inline-size: 4px; block-size: 4px; margin: 5px; }
        .scroll .u { transform: rotate(-45deg); }
        .scroll .d { transform: rotate(135deg); }
        .scroll .l { transform: rotate(-135deg); }
        .scroll .r { transform: rotate(45deg); margin-inline-end: 20px; }
        .scroll b { background: #c9c9c9; }
        .y b { inline-size: 13px; block-size: 43px; margin-bottom: auto; }
        .x b { inline-size: 114px; block-size: 15px; margin-inline-end: auto; }
        .study { overflow: hidden; margin-inline-end: 2px; padding-top: 1px; flex: 1; }
        .handle { position: absolute; inset-inline-start: 100%; top: 47%; display: grid; place-items: center; inline-size: 8px; block-size: 38px; padding: 0; box-sizing: border-box; background: #fff; border: 1px solid #999; border-inline-start: 0; z-index: 2; }
        cad-filter { flex: none; }
        .lower { margin-top: 3px; }
      </style>
      <div class="top"></div>
      <div class="splitter"><span class="dot"></span></div>
      <div class="tabs">
        <button class="active" aria-label="FeatureManager"><cad-icon name="part"></cad-icon></button>
        <button aria-label="PropertyManager"><cad-icon name="property"></cad-icon></button>
        <button aria-label="ConfigurationManager"><cad-icon name="config"></cad-icon></button>
        <button aria-label="DimXpertManager"><cad-icon name="target"></cad-icon></button>
        <button aria-label="DisplayManager"><cad-icon name="ballHalf"></cad-icon></button>
        <button class="more" aria-label="Suivant"><cad-icon name="next"></cad-icon></button>
      </div>
      <cad-filter class="first"></cad-filter>
      <div class="feature">
        <div class="tree" role="tree">
          <cad-tree-item level="0" icon="part">Desk-24_201_RDM (Défaut) &lt;&lt;Défau</cad-tree-item>
          <cad-tree-item toggle="closed" icon="annotations">Annotations</cad-tree-item>
          <cad-tree-item toggle="closed" icon="bodies">Corps volumiques(1)</cad-tree-item>
          <cad-tree-item icon="steel">1.0037 (S235JR)</cad-tree-item>
          <cad-tree-item icon="plane">Plan de face</cad-tree-item>
          <cad-tree-item icon="planeHidden">Plan de dessus</cad-tree-item>
          <cad-tree-item icon="plane">Plan de droite</cad-tree-item>
          <cad-tree-item icon="origin">Origine</cad-tree-item>
        </div>
        <div class="scroll y"><i class="u"></i><b></b><i class="d"></i></div>
      </div>
      <div class="scroll x"><i class="l"></i><b></b><i class="r"></i></div>
      <div class="splitter lower"><span class="dot"></span></div>
      <cad-filter menu></cad-filter>
      <div class="study" role="tree">
        <cad-tree-item level="0" icon="studyTree">Statique 1* (-Défaut-)</cad-tree-item>
        <cad-tree-item icon="meshOk shell">Desk-24_201_RDM (-[SW]1.003</cad-tree-item>
        <cad-tree-item icon="connector">Connexions</cad-tree-item>
        <cad-tree-item toggle="closed" icon="fixture">Déplacements imposés</cad-tree-item>
        <cad-tree-item toggle="open" icon="load">Chargements externes</cad-tree-item>
        <cad-tree-item level="2" icon="force">Force-1 (:Par entité: 200 kgf:)</cad-tree-item>
        <cad-tree-item toggle="closed" icon="mesh">Maillage</cad-tree-item>
        <cad-tree-item icon="options">Options des résultats</cad-tree-item>
        <cad-tree-item toggle="open" icon="folder" bold>Résultats</cad-tree-item>
        <cad-tree-item level="2" icon="stress" bold selected>Contraintes1 (-vonMises-)</cad-tree-item>
        <cad-tree-item level="2" icon="displacement">Déplacements1 (-Dépl. résultan</cad-tree-item>
        <cad-tree-item level="2" icon="strain">Déformations1 (-Equivalente-)</cad-tree-item>
      </div>
      <button class="handle" aria-label="Masquer le panneau"><span class="dot"></span></button>`;
  }
}
customElements.define('cad-side-panel', CadSidePanel);

class CadLegend extends HTMLElement {
  constructor() {
    super();
    this.attachShadow({ mode: 'open' });
    const values = ['1,350e+08', '1,215e+08', '1,080e+08', '9,452e+07', '8,102e+07', '6,751e+07',
      '5,401e+07', '4,051e+07', '2,701e+07', '1,351e+07', '5,405e+03'];
    this.shadowRoot.innerHTML = `
      <style>
        :host { display: block; }
        .title, .scale { margin-inline-start: 24px; }
        .scale { display: flex; margin-top: 14px; }
        .ramp { inline-size: 24px; block-size: 300px; margin-top: 12px; border-block: 1px solid #000; background: linear-gradient(#f00, #ff0 20%, #0f0 50%, #0ff 70%, #00f); }
        ol { margin: 0; padding: 0; list-style: none; }
        li { block-size: 30px; display: flex; gap: 9px; }
        li::before { content: ""; inline-size: 3px; block-size: 1px; margin-top: 12px; background: #000; }
        .limit { display: flex; align-items: center; gap: 3px; }
      </style>
      <div class="title">von Mises (N/m^2)</div>
      <div class="scale">
        <div class="ramp"></div>
        <ol>${values.map(v => `<li>${v}</li>`).join('')}</ol>
      </div>
      <div class="limit">
        <svg width="24" height="10" viewBox="0 0 24 10"><path d="M0 5h16" stroke="red"/><path d="M16 0l8 5-8 5z" fill="red"/></svg>
        <span>Limite d'élasticité: 2,350e+08</span>
      </div>`;
  }
}
customElements.define('cad-legend', CadLegend);

// Deformed frame coloured by von Mises stress, with its loads and fixtures
class CadModel extends HTMLElement {
  constructor() {
    super();
    this.attachShadow({ mode: 'open' });
    const loads = [672, 720, 737, 783, 894, 1005, 1116, 1227, 1339, 1384, 1401, 1450];
    const frame = 'M680 284C720 310 760 328 817 355L893 389 967 422 1036 454Q1038 560 1048 660L1051 722Q1020 743 1000 756L920 803 867 836 810 871Q760 900 723 930H790Q830 904 867 883L920 853 993 808 1060 766 1078 755 1200 748 1354 738Q1354 780 1348 833L1344 930H1384L1391 800Q1394 750 1393 660Q1391 570 1383 480C1378 390 1353 260 1343 206L1303 212Q1318 315 1336 408L1213 413 1060 419Q1010 396 993 390L933 363 887 343Q800 306 750 276Z'
      + 'M1076 459L1240 452 1339 447Q1350 573 1354 699L1233 704 1090 713Q1090 590 1076 459Z';
    const blob = (x, y, rx, ry, c, a = 0) =>
      `<ellipse cx="${x}" cy="${y}" rx="${rx}" ry="${ry}" fill="${c}" transform="rotate(${a} ${x} ${y})"/>`;
    const foot = (x, w) => `
      <ellipse cx="${x - 3}" cy="931" rx="5" ry="6" fill="#00b800"/>
      <path d="M${x - 2} 931l20-6h2v12h-2z" fill="#00d000"/><path d="M${x + 18} 929h6v4h-6z" fill="#00a800"/>
      <path d="M${x + 21} 925h12v12h-12z" fill="#00b800"/><path d="M${x + 21} 927h12v4h-12z" fill="#00e400"/>
      <path d="M${x - 3} 932h6l${w - 3} 14h${-2 * w}z" fill="#00e400"/><path d="M${x - 6} 946h12v10h-12z" fill="#00a000"/>
      <path d="M${x - 2} 946h4v10h-4z" fill="#00c800"/><path d="M${x - w} 956h${2 * w}v3h${-2 * w}z" fill="#00b400"/>`;
    this.shadowRoot.innerHTML = `
      <style>
        :host { display: block; }
        svg { display: block; inline-size: 100%; block-size: 100%; }
        text { font: 24px "DejaVu Sans", sans-serif; fill: #6d93f2; stroke: #cfd9ef; stroke-width: 2px; paint-order: stroke; }
      </style>
      <svg viewBox="234 69 1685 974" role="img" aria-label="Déformée du bureau">
        <defs>
          <clipPath id="frame"><path d="${frame}" clip-rule="evenodd"/></clipPath>
          <filter id="soft" filterUnits="userSpaceOnUse" x="600" y="120" width="900" height="860"><feGaussianBlur stdDeviation="9"/></filter>
          <filter id="edge" filterUnits="userSpaceOnUse" x="600" y="120" width="900" height="860"><feGaussianBlur stdDeviation="4"/></filter>
          <filter id="tight" filterUnits="userSpaceOnUse" x="600" y="120" width="900" height="860"><feGaussianBlur stdDeviation="2"/></filter>
          <linearGradient id="top"><stop offset="0" stop-color="#0000b8"/><stop offset=".3" stop-color="#0008c0"/><stop offset=".6" stop-color="#0004c4"/><stop offset="1" stop-color="#0000bc"/></linearGradient>
        </defs>
        ${loads.map(x => `<path d="M${x - 2} 125h4v40h-4z" fill="#bf00bf"/><path d="M${x - 7} 165h14l-7 15z" fill="#a600a6"/>`).join('')}
        <g clip-path="url(#frame)">
          <path d="${frame}" fill="#0022c6" fill-rule="evenodd"/>
          <g filter="url(#soft)">
            ${blob(695, 298, 50, 12, '#0068c8', 22)}${blob(795, 298, 60, 9, '#0070c8', 25)}${blob(745, 308, 8, 22, '#0018c0', -30)}
            ${blob(990, 435, 60, 10, '#0078c8', 25)}${blob(880, 358, 100, 8, '#0036c8', 25)}
            ${blob(820, 898, 50, 8, '#0074c8', -32)}${blob(970, 768, 80, 8, '#0060c8', -32)}${blob(900, 835, 90, 10, '#0034c8', -32)}
            ${blob(1030, 764, 60, 7, '#0014c0', -32)}
            ${blob(1040, 590, 14, 140, '#0070c8', -4)}${blob(1082, 590, 14, 110, '#0000b8', -5)}
            ${blob(1055, 450, 26, 16, '#00b0c8')}${blob(1082, 437, 22, 20, '#0078c8')}${blob(1190, 436, 100, 18, '#0014c0', -2)}
            ${blob(1318, 420, 30, 10, '#0070c8')}${blob(1355, 432, 22, 26, '#0098c4')}${blob(1334, 390, 10, 32, '#0098c8')}
            ${blob(1332, 290, 12, 90, '#0030c4', -10)}${blob(1376, 370, 7, 50, '#0070c0', -8)}
            ${blob(1366, 550, 12, 110, '#0000c0', -3)}${blob(1340, 560, 8, 90, '#0050c8')}${blob(1397, 570, 6, 110, '#0050c8')}
            ${blob(1366, 715, 22, 32, '#0098c4')}${blob(1388, 740, 12, 60, '#0070c4')}${blob(1368, 780, 20, 30, '#0058c0')}${blob(1366, 890, 20, 80, '#0048c4')}
            ${blob(1075, 722, 24, 16, '#00a0c0')}${blob(1112, 730, 20, 20, '#0058c8')}${blob(1230, 726, 90, 15, '#0010c0', -3)}${blob(1335, 732, 30, 8, '#0070c8')}
            ${blob(1040, 735, 32, 10, '#0098c8', -33)}
          </g>
          <g filter="url(#edge)" fill="none" stroke-width="5">
            <path d="M750 277Q800 303 833 319L887 343" stroke="#0090f0"/><path d="M887 343L993 390" stroke="#0818f8"/><path d="M993 390L1060 419" stroke="#00a0f0"/>
            <path d="M680 286Q747 322 817 355" stroke="#0070c8"/><path d="M817 355L920 402" stroke="#000890"/>
            <path d="M1062 419L1140 416" stroke="#0098f0"/><path d="M1140 416L1290 410" stroke="#0010f8"/><path d="M1290 410L1336 408" stroke="#00b0f0"/>
            <path d="M1090 713L1160 708" stroke="#0090f0"/><path d="M1160 708L1310 701" stroke="#0010f8"/><path d="M1310 701L1354 699" stroke="#0098f0"/>
            <path d="M1051 722L940 791" stroke="#00a0f0"/><path d="M940 791L840 853" stroke="#0018f8"/><path d="M840 853L723 930" stroke="#0058f0"/>
            <path d="M790 930L880 877" stroke="#006cb0"/><path d="M920 853L1020 792" stroke="#000890"/>
            <path d="M1313 270L1322 330M1355 270L1366 330" stroke="#0010d0"/><path d="M1348 833L1352 800M1391 800L1388 860" stroke="#0008d0"/>
          </g>
          <g filter="url(#edge)">
            ${blob(1048, 433, 9, 6, '#0008b8', -40)}${blob(1070, 472, 16, 7, '#0010b8')}${blob(1356, 404, 11, 8, '#0018c0', -25)}
            ${blob(1076, 704, 13, 8, '#0008c0')}${blob(1066, 743, 10, 7, '#0008c0', 25)}${blob(1376, 734, 10, 8, '#0018c0')}
            ${blob(750, 279, 13, 5, '#00d8b0', 25)}${blob(1056, 420, 22, 6, '#00e8b0', 8)}${blob(1024, 447, 22, 7, '#00e0a0', 27)}
            ${blob(1076, 457, 10, 6, '#00e090')}${blob(1336, 400, 6, 15, '#00f0b0')}${blob(1326, 410, 16, 4, '#00e0c0')}${blob(1342, 447, 8, 7, '#00e0b8')}
            ${blob(1046, 728, 18, 7, '#00ffc0', -33)}${blob(1090, 716, 9, 6, '#00e0a0')}${blob(1074, 755, 15, 6, '#00e0a8', -20)}
            ${blob(1356, 701, 8, 7, '#00e0c0')}${blob(1346, 736, 16, 5, '#00e0c0')}${blob(1357, 744, 6, 13, '#00e0b8')}
          </g>
          <g filter="url(#tight)">
            ${blob(748, 279, 5, 2, '#30e060')}${blob(1055, 420, 8, 3, '#20e020')}${blob(1029, 449, 9, 4, '#10c800', 28)}${blob(1075, 457, 4, 3, '#10b800')}
            ${blob(1336, 405, 4, 7, '#50e000')}${blob(1048, 726, 8, 3, '#30f000', -33)}${blob(1089, 715, 3, 3, '#10d000')}${blob(1077, 754, 5, 3, '#10b800')}
            ${blob(1356, 739, 3, 5, '#60e000')}${blob(1341, 446, 2, 2, '#20c860')}
          </g>
          <path d="M1034 451h3v3h-3zM1336 407h2v2h-2zM1051 723h2v2h-2z" fill="#a02000"/>
        </g>
        <path d="M817 355L893 389 1030 451M1078 755L993 808 867 883M1078 755L1354 738M1076 459L1339 447M723 930H790" fill="none" stroke="#001060" stroke-opacity=".6"/>
        <path d="M610 261C760 245 900 233 1040 219S1300 185 1418 165L1423 193 1383 200V203L1343 209 1303 215 1262 222V220C1190 229 1110 240 1040 248S860 264 773 272V276L743 279 680 285 653 288V286L612 289Z" fill="url(#top)" stroke="#000048"/>
        <g fill="none"><path d="M615 143h891v825H615zM1061 143v825" stroke="#5f82cf" stroke-opacity=".8" stroke-width="3"/><path d="M615 143h891v825H615z" stroke="#12306f" stroke-width="2"/><path d="M1062 143v825" stroke="#12306f" stroke-width="2"/></g>
        <text x="617" y="163">Plan de droite</text>
        ${foot(725, 10)}${foot(787, 10)}${foot(1346, 8)}${foot(1382, 8)}
        <path d="M721 930h8M1343 930h6M1380 930h6" stroke="#000060"/>
      </svg>`;
  }
}
customElements.define('cad-model', CadModel);

class CadViewport extends HTMLElement {
  constructor() {
    super();
    this.attachShadow({ mode: 'open' });
    this.shadowRoot.innerHTML = `
      <style>
        :host {
          position: relative; display: flex; flex-direction: column; min-inline-size: 0; min-block-size: 0; border-inline-end: 1px solid #f7f7f7;
          background:
            radial-gradient(ellipse 35% 60% at 100% 0, rgba(110, 125, 160, .34), transparent),
            linear-gradient(#dae5ff, #d5e1fb 6%, #bcc8de 18%, #a9b4c8 30%, #9ca6b9 40%, #858ea2 52%, #9fa8b9 63%, #b9c0cf 71%, #cfd4e1 81%, #dce0eb 91%, #e6eaf4);
        }
        cad-model { position: absolute; inset: 0; }
        .head { position: relative; display: grid; grid-template-columns: 1fr auto 1fr; padding: 2px 4px 0 0; }
        .views, .window { display: flex; --caret: #8a8fa0; }
        .views { grid-column: 2; opacity: .9; }
        .window { justify-self: end; color: #858c9c; --icon-size: 18px; }
        .info { position: relative; margin: 4px 0 auto 16px; line-height: 15px; color: #000; }
        .info p { margin: 0; }
        cad-legend { position: absolute; top: 196px; inset-inline-end: 184px; color: #000; }
        .corner { position: relative; margin: 0 0 1px; }
        .corner svg { display: block; }
        .corner svg text { font: 9px "Liberation Sans", sans-serif; }
        .corner b { display: block; margin: 33px 0 0 12px; }
        cad-task-pane { position: absolute; top: 76px; inset-inline-end: 0; }
      </style>
      <cad-model></cad-model>
      <div class="head">
        <div class="views">
          <cad-tool icon="zoomFit"></cad-tool><cad-tool icon="zoomArea"></cad-tool><cad-tool icon="previous"></cad-tool>
          <cad-tool icon="sectionView"></cad-tool><cad-tool icon="dynamicView"></cad-tool><cad-tool icon="orientation" menu></cad-tool>
          <cad-tool icon="display" menu></cad-tool><cad-tool icon="visibility" menu></cad-tool><cad-tool icon="appearance"></cad-tool>
          <cad-tool icon="scene" menu></cad-tool><cad-tool icon="monitor" menu></cad-tool>
        </div>
        <div class="window">
          <cad-tool icon="panelLeft"></cad-tool><cad-tool icon="panelRight"></cad-tool><cad-tool icon="minimize"></cad-tool>
          <cad-tool icon="restore"></cad-tool><cad-tool icon="close"></cad-tool>
        </div>
      </div>
      <div class="info">
        <p>Nom du modèle: Desk-24_201_RDM</p>
        <p>Nom de l'étude: Statique 1(-Défaut-)</p>
        <p>Type de tracé: Statique contrainte nodale Contraintes1</p>
        <p>Echelle de déformation: 119,336</p>
      </div>
      <cad-legend></cad-legend>
      <cad-task-pane></cad-task-pane>
      <div class="corner">
        <svg width="60" height="50" viewBox="0 0 60 50">
          <circle cx="41" cy="43" r="4" fill="#c01010"/>
          <path d="M39 42V20h4v22z" fill="#1c7a1c"/><path d="M41 20v22h2V20z" fill="#7ad87a"/><path d="M37 21h8l-4-8z" fill="#0b5c0b"/>
          <path d="M18 40h23v4H18z" fill="#0000a8"/><path d="M20 38v8l-8-4z" fill="#0000a8"/>
          <text x="38" y="8" fill="#1c8a1c">Y</text><text x="2" y="42" fill="#2020f0">Z</text>
        </svg>
        <b>*Droite</b>
      </div>`;
  }
}
customElements.define('cad-viewport', CadViewport);

class CadTaskPane extends HTMLElement {
  constructor() {
    super();
    this.attachShadow({ mode: 'open' });
    this.shadowRoot.innerHTML = `
      <style>
        :host { display: flex; flex-direction: column; border: solid #808080; border-width: 1px 0 0 1px; --tool-size: 24px; --tool-height: 24px; --icon-size: 19px; }
        cad-tool { background: #d6d6d6; border-bottom: 1px solid #808080; }
        cad-tool:first-of-type { background: #fff; }
      </style>
      ${['home', 'library', 'explorer', 'palette', 'ball', 'property'].map(n => `<cad-tool icon="${n}"></cad-tool>`).join('')}`;
  }
}
customElements.define('cad-task-pane', CadTaskPane);

class CadBottomTabs extends HTMLElement {
  constructor() {
    super();
    this.attachShadow({ mode: 'open' });
    this.shadowRoot.innerHTML = `
      <style>
        :host { display: flex; box-sizing: border-box; block-size: 17px; border-top: 1px solid #c0c0c0; border-bottom: 1px solid #808080; padding-inline-start: 27px; line-height: 14px; }
        button { box-sizing: border-box; display: flex; align-items: center; gap: 4px; margin: 0; padding: 0 11px; border: solid #808080; border-width: 1px 1px 0 0; background: #d3d3d3; color: #111; font: inherit; line-height: 14px; }
        .nav { inline-size: 16px; padding: 0; justify-content: center; background: #c8c8c8; border: 1px solid #999; border-top-color: #222; color: #8c8c8c; }
        .nav svg { display: block; }
        .first { padding-inline: 15px 10px; }
        .active { background: #f7f7f7; font-weight: 700; padding-inline: 8px 19px; border-top: 0; }
        .rest { flex: 1; border-top: 1px solid #808080; background: #fff; }
        cad-icon { --icon-size: 12px; }
      </style>
      <button class="nav" aria-label="Premier"><svg width="10" height="10"><path d="M2 1v8M8 1v8L3 5z" fill="currentColor" stroke="currentColor"/></svg></button>
      <button class="nav" aria-label="Précédent"><svg width="10" height="10"><path d="M7 1v8L3 5z" fill="currentColor"/></svg></button>
      <button class="nav" aria-label="Suivant"><svg width="10" height="10"><path d="M3 1v8l4-4z" fill="currentColor"/></svg></button>
      <button class="nav" aria-label="Dernier"><svg width="10" height="10"><path d="M8 1v8M2 1v8l5-4z" fill="currentColor" stroke="currentColor"/></svg></button>
      <button class="first">Modèle</button><button>Vues 3D</button><button>Etude de mouvement 1</button>
      <button class="active"><cad-icon name="motion"></cad-icon>Statique 1</button>
      <span class="rest"></span>`;
  }
}
customElements.define('cad-bottom-tabs', CadBottomTabs);

class CadStatusBar extends HTMLElement {
  constructor() {
    super();
    this.attachShadow({ mode: 'open' });
    this.shadowRoot.innerHTML = `
      <style>
        :host { display: flex; align-items: center; box-sizing: border-box; block-size: 20px; padding-inline: 2px 0; border-bottom: 2px solid #0a4a84; }
        .mode { margin-inline-start: auto; inline-size: 192px; }
        .units { display: flex; align-items: center; gap: 20px; margin: 0; padding: 0; border: 0; background: none; font: inherit; color: inherit; inline-size: 119px; }
        .units::after { content: ""; border: solid transparent; border-width: 0 3px 3px; border-bottom-color: #333; }
        cad-icon { --icon-size: 18px; margin-inline-end: 2px; }
      </style>
      <span>SOLIDWORKS Premium 2023 SP5.0</span>
      <span class="mode">Edition: Pièce</span>
      <button class="units">Personnalisé</button>
      <cad-icon name="tag"></cad-icon>`;
  }
}
customElements.define('cad-status-bar', CadStatusBar);

class CadApp extends HTMLElement {
  constructor() {
    super();
    this.attachShadow({ mode: 'open' });
    this.shadowRoot.innerHTML = `
      <style>
        :host { display: flex; flex-direction: column; block-size: 100vh; }
        .workspace { flex: 1; min-block-size: 0; display: grid; grid-template: auto minmax(0, 1fr) / 234px minmax(0, 1fr); }
        cad-tabs { grid-area: 1 / 1 / 2 / 3; justify-self: start; z-index: 1; }
        cad-side-panel { grid-area: 2 / 1; z-index: 1; }
        cad-viewport { grid-area: 1 / 2 / 3 / 3; }
      </style>
      <cad-title-bar></cad-title-bar>
      <cad-command-bar></cad-command-bar>
      <div class="workspace">
        <cad-viewport></cad-viewport>
        <cad-tabs>
          <button role="tab">Fonctions</button><button role="tab">Esquisse</button><button role="tab">Surfaces</button>
          <button role="tab">Evaluer</button><button role="tab">Compléments de SOLIDWORKS</button>
          <button role="tab" aria-selected="true">Simulation</button>
        </cad-tabs>
        <cad-side-panel></cad-side-panel>
      </div>
      <cad-bottom-tabs></cad-bottom-tabs>
      <cad-status-bar></cad-status-bar>`;
  }
}
customElements.define('cad-app', CadApp);
</script>
</body>
</html>
